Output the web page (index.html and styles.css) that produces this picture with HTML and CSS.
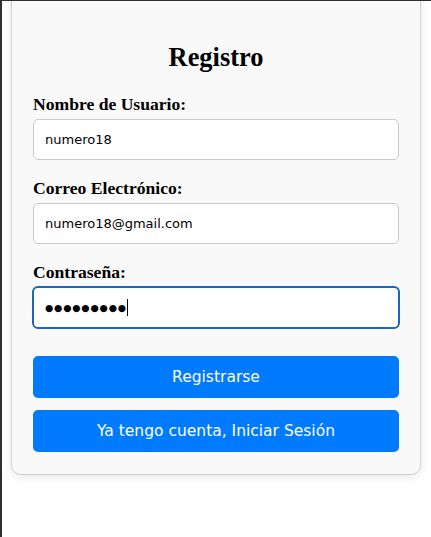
FILE: index.html
```html
<!DOCTYPE html>
<html lang="es">
<head>
<meta charset="utf-8">
<title>Registro</title>
<link rel="stylesheet" href="styles.css">
</head>
<body>
<div class="frame">
  <form class="card">
    <h2 class="title">Registro</h2>
    <div class="field">
      <label class="label" for="u">Nombre de Usuario:</label>
      <input class="input" id="u" type="text" value="numero18">
    </div>
    <div class="field">
      <label class="label" for="e">Correo Electrónico:</label>
      <input class="input" id="e" type="email" value="numero18@gmail.com">
    </div>
    <div class="field">
      <label class="label" for="p">Contraseña:</label>
      <div class="input input-focus"><span class="dots">●●●●●●●●●</span><span class="caret"></span></div>
    </div>
    <div class="actions">
      <button class="btn" type="button">Registrarse</button>
      <button class="btn" type="button">Ya tengo cuenta, Iniciar Sesión</button>
    </div>
  </form>
</div>
</body>
</html>
```

FILE: styles.css
```css
* { box-sizing: border-box; }
html, body { margin: 0; padding: 0; background: #fff; }
body { font-family: "Liberation Serif", "Times New Roman", serif; }
.frame {
  height: 537px;
  border-left: 2px solid #2e2e2e;
  border-top: 1px solid #2e2e2e;
  overflow: hidden;
  padding: 0 10px 0 9px;
}
.card {
  margin-top: -10px;
  width: 410px;
  background: #f9f9f9;
  border: 1px solid #d0d0d0;
  border-radius: 10px;
  box-shadow: 0 2px 10px rgba(0,0,0,0.1);
  padding: 20px 21px 22px 21px;
}
.title {
  margin: 30px 0 22px;
  line-height: 30px;
  text-align: center;
  font-size: 26.4px;
  font-weight: bold;
  color: #000;
}
.field { margin-bottom: 18px; }
.label {
  display: block;
  font-weight: bold;
  font-size: 17.6px;
  line-height: 20px;
  margin-bottom: 5px;
  color: #000;
}
.input {
  display: flex;
  align-items: center;
  width: 100%;
  height: 41px;
  padding: 0 11px;
  border: 1px solid #c9c9c9;
  border-radius: 5px;
  background: #fff;
  font-family: "DejaVu Sans", Tahoma, sans-serif;
  font-size: 13px;
  color: #000;
  outline: none;
}
.input-focus {
  border: 2px solid #1a64c8;
  border-radius: 6px;
  height: 43px;
  margin: -1px -1px 0;
  width: calc(100% + 2px);
  padding: 0 10px 0 11px;
}
.dots { font-size: 9.5px; letter-spacing: 0.8px; }
.caret { display: inline-block; width: 1px; height: 17px; background: #000; margin-left: 0; }
.actions { display: flex; flex-direction: column; gap: 12px; margin-top: 27px; }
.btn {
  width: 100%;
  height: 42px;
  border: none;
  border-radius: 5px;
  background: #007bff;
  color: #fff;
  font-family: "DejaVu Sans", Tahoma, sans-serif;
  font-size: 15.5px;
  cursor: pointer;
}
```
